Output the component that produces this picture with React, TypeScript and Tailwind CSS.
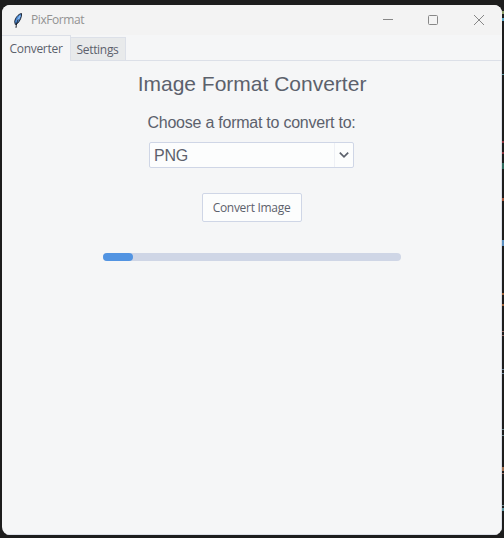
import React from "react";

const editorMarks = [
  { top: 11, height: 3, color: "#8f9f6a" },
  { top: 18, height: 3, color: "#5ba6c4" },
  { top: 74, height: 1, color: "#5c9aa5" },
  { top: 141, height: 2, color: "#8c3540" },
  { top: 152, height: 2, color: "#8c3540" },
  { top: 163, height: 6, color: "#2f6b5c" },
  { top: 198, height: 3, color: "#a3563a" },
  { top: 240, height: 6, color: "#5b8fc0" },
  { top: 293, height: 2, color: "#a3653a" },
  { top: 304, height: 2, color: "#a3653a" },
  { top: 331, height: 1, color: "#946a62" },
  { top: 335, height: 1, color: "#946a62" },
  { top: 369, height: 1, color: "#71879a" },
  { top: 373, height: 1, color: "#71879a" },
  { top: 429, height: 1, color: "#6f8a90" },
  { top: 435, height: 1, color: "#6f8a90" },
  { top: 467, height: 4, color: "#a3704f" },
  { top: 473, height: 1, color: "#946a62" },
  { top: 505, height: 1, color: "#6f8a90" },
  { top: 508, height: 3, color: "#5b929c" },
];

function FeatherIcon() {
  return (
    <svg width="10" height="17" viewBox="0 0 10 17">
      <path d="M8.500 1.500C5.300 2 2.200 6 1.700 9.500L2.300 12.500l2.400-1.300C7 8.800 8.800 5 8.500 1.500Z" fill="#4a8ad6" stroke="#1b2230" strokeWidth="1" />
      <path d="M7.300 3.500 4 9.500" stroke="#8fc0f5" strokeWidth="1.300" />
      <path d="M5.200 7.500C4 10 3.200 13 3 15.800" fill="none" stroke="#171b24" strokeWidth="1" />
    </svg>
  );
}

function TitleBar() {
  return (
    <header className="flex h-[30px] shrink-0 items-center bg-[#f3f3f3] pl-[11px] text-[#929292]">
      <FeatherIcon />
      <span className="ml-2 w-[54px] text-[12px] leading-4 tracking-[-0.42px] whitespace-nowrap">PixFormat</span>
      <div className="ml-auto flex h-full items-center pr-[18px]">
        <svg width="101" height="10" viewBox="0 0 101 10" fill="none" stroke="#878787">
          <path d="M0 4.500h10" />
          <rect x="45.500" y=".5" width="9" height="9" rx="1" />
          <path d="m91 0 10 10m0-10L91 10" />
        </svg>
      </div>
    </header>
  );
}

export default function App() {
  return (
    <div className="relative h-[538px] w-[504px] overflow-hidden bg-[#1d1d1d] pt-[5px] pl-[2px] font-['Open_Sans','Noto_Sans',sans-serif] text-[#5c616c]">
      {editorMarks.map((mark) => (
        <i key={mark.top} className="absolute right-0 w-[2px]" style={{ top: mark.top, height: mark.height, backgroundColor: mark.color }} />
      ))}
      <main className="flex h-[530px] w-[500px] flex-col overflow-hidden rounded-[8px] bg-[#f5f6f7]">
        <TitleBar />
        <nav className="flex h-[26px] shrink-0 items-end text-[12px] leading-4">
          <button className="flex h-[26px] w-[69px] items-center justify-center border-t border-r border-[#dce0e8] bg-[#f5f6f7] whitespace-nowrap">
            <span className="tracking-[-0.3px]">Converter</span>
          </button>
          <button className="flex h-6 w-[55px] items-center justify-center border-t border-r border-b border-[#dce0e8] bg-[#e8eaeb] pt-px pr-px whitespace-nowrap">
            <span className="tracking-[-0.3px]">Settings</span>
          </button>
          <div className="h-full flex-1 border-b border-[#dce0e8]" />
        </nav>
        <section className="flex flex-1 flex-col items-center border-r border-b border-[#dce0e8]">
          <h1 className="mt-[11px] pl-px font-['Liberation_Sans',Arial,sans-serif] text-[21px] leading-6 whitespace-nowrap">Image Format Converter</h1>
          <p className="mt-[17px] font-['Liberation_Sans',Arial,sans-serif] text-[16px] leading-5 tracking-[-0.24px] whitespace-nowrap">Choose a format to convert to:</p>
          <button className="mt-[9px] flex h-[26px] w-[205px] items-stretch rounded-[2px] border border-[#cfd6e6] bg-[#fcfdfd] font-['Liberation_Sans',Arial,sans-serif] text-[16px] leading-6">
            <span className="flex-1 pt-px pl-1 text-left tracking-[-0.2px]">PNG</span>
            <span className="flex w-[19px] items-center justify-center border-l border-[#eef0f5]">
              <svg width="10" height="6" viewBox="0 0 10 6" fill="none" stroke="#5c616c" strokeWidth="1.700">
                <path d="m.8 .6 4.200 4.200L9.200.6" />
              </svg>
            </span>
          </button>
          <button className="mt-[25px] h-[29px] w-[100px] rounded-[2px] border border-[#cfd6e6] bg-[#fcfdfd] pt-px text-[12px] leading-4 tracking-[-0.3px] whitespace-nowrap">Convert Image</button>
          <div className="mt-[31px] h-2 w-[298px] rounded-full bg-[#cfd6e6]">
            <div className="h-full w-[30px] rounded-full bg-[#5294e2]" />
          </div>
        </section>
      </main>
    </div>
  );
}
